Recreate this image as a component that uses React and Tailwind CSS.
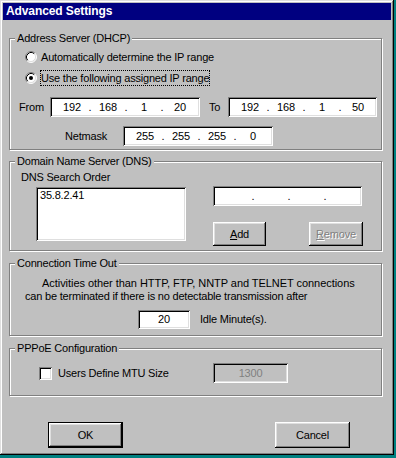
import React from "react";

const sunken =
  "shadow-[inset_1px_1px_0_#808080,inset_-1px_-1px_0_#fff,inset_2px_2px_0_#000,inset_-2px_-2px_0_#dfdfdf]";
const raised =
  "bg-[#c0c0c0] shadow-[inset_-1px_-1px_0_#000,inset_1px_1px_0_#fff,inset_-2px_-2px_0_#808080,inset_2px_2px_0_#dfdfdf]";

function Group({ title, className = "", children }) {
  return (
    <div className={`w-[373px] border border-[#808080] shadow-[1px_1px_0_#fff,inset_1px_1px_0_#fff] ${className}`}>
      <div className="-mt-[7px] ml-[5px] w-fit px-[2px] bg-[#c0c0c0] leading-[13px]">{title}</div>
      {children}
    </div>
  );
}

function IpField({ parts = ["", "", "", ""], className = "" }) {
  return (
    <div className={`${sunken} bg-white h-[20px] flex items-center pl-[6px] shrink-0 ${className}`}>
      {parts.map((p, i) => (
        <React.Fragment key={i}>
          {i > 0 && <span className="w-[4px] text-center">.</span>}
          <span className="w-[32px] text-center">{p}</span>
        </React.Fragment>
      ))}
    </div>
  );
}

function Radio({ checked }) {
  return (
    <svg width="12" height="12" viewBox="0 0 12 12" className="shrink-0">
      <circle cx="6" cy="6" r="5" fill="#fff" />
      <path d="M2.11 9.89A5.5 5.5 0 0 1 9.89 2.11" stroke="#808080" fill="none" />
      <path d="M9.89 2.11A5.5 5.5 0 0 1 2.11 9.89" stroke="#fff" fill="none" />
      <path d="M2.82 9.18A4.5 4.5 0 0 1 9.18 2.82" stroke="#000" fill="none" />
      <path d="M9.18 2.82A4.5 4.5 0 0 1 2.82 9.18" stroke="#dfdfdf" fill="none" />
      {checked && <circle cx="6" cy="6" r="2" fill="#000" />}
    </svg>
  );
}

export default function App() {
  return (
    <div className="w-[396px] h-[458px] bg-[#008080] font-['Liberation_Sans',Arial,sans-serif] text-[11px] tracking-[-0.2px] leading-[13px] text-black">
      <div className="w-[394px] h-[455px] bg-[#c0c0c0] p-[3px] flex flex-col shadow-[inset_-1px_-1px_0_#000,inset_1px_1px_0_#dfdfdf,inset_-2px_-2px_0_#808080,inset_2px_2px_0_#fff]">
        {/* title bar */}
        <div className="h-[17px] bg-[#000080] text-white font-bold text-[12px] tracking-[-0.1px] leading-[17px] pl-[3px]">
          Advanced Settings
        </div>

        <div className="pl-[6px] pt-[18px]">
          <Group title="Address Server (DHCP)" className="pb-[3px]">
            <div className="mt-[2px] h-[20px] flex items-center pl-[15px]">
              <Radio />
              <span className="ml-[3px] border border-transparent leading-[14px]">Automatically determine the IP range</span>
            </div>
            <div className="mt-[1px] h-[20px] flex items-center pl-[15px]">
              <Radio checked />
              <span className="ml-[3px] border border-dotted border-black leading-[14px]">Use the following assigned IP range</span>
            </div>
            <div className="mt-[9px] h-[20px] flex items-center pl-[9px]">
              <span className="w-[31px]">From</span>
              <IpField parts={["192", "168", "1", "20"]} className="w-[150px]" />
              <span className="ml-[9px] w-[19px]">To</span>
              <IpField parts={["192", "168", "1", "50"]} className="w-[149px]" />
            </div>
            <div className="mt-[9px] h-[20px] flex items-center pl-[55px]">
              <span className="w-[58px]">Netmask</span>
              <IpField parts={["255", "255", "255", "0"]} className="w-[150px]" />
            </div>
          </Group>

          <Group title="Domain Name Server (DNS)" className="mt-[11px] pb-[4px]">
            <div className="mt-[2px] pl-[11px] leading-[14px]">DNS Search Order</div>
            <div className="mt-[2px] flex pl-[26px]">
              <div className={`${sunken} bg-white mt-[1px] w-[150px] h-[54px] pt-[2px] pl-[4px]`}>35.8.2.41</div>
              <div className="ml-[27px]">
                <IpField className="w-[149px]" />
                <div className="mt-[16px] flex">
                  <button className={`${raised} w-[53px] h-[24px]`}>
                    <span className="underline">A</span>dd
                  </button>
                  <button className={`${raised} ml-[43px] w-[54px] h-[24px] text-[#808080] [text-shadow:1px_1px_0_#fff]`}>
                    <span className="underline">R</span>emove
                  </button>
                </div>
              </div>
            </div>
          </Group>

          <Group title="Connection Time Out" className="mt-[12px] pb-[6px]">
            <div className="mt-[7px] pl-[32px] tracking-[-0.05px]">Activities other than HTTP, FTP, NNTP and TELNET connections</div>
            <div className="pl-[15px]">can be terminated if there is no detectable transmission after</div>
            <div className="mt-[7px] h-[19px] flex items-center pl-[128px]">
              <div className={`${sunken} bg-white w-[52px] h-[19px] flex items-center justify-center`}>20</div>
              <span className="ml-[10px]">Idle Minute(s).</span>
            </div>
          </Group>

          <Group title="PPPoE Configuration" className="mt-[12px] pb-[12px]">
            <div className="mt-[8px] h-[20px] flex items-center pl-[29px]">
              <div className="w-[174px] flex items-center">
                <div className={`${sunken} bg-white w-[13px] h-[13px] shrink-0`} />
                <span className="ml-[6px]">Users Define MTU Size</span>
              </div>
              <div className={`${sunken} bg-[#c0c0c0] w-[75px] h-[20px] flex items-center justify-center text-[#808080]`}>1300</div>
            </div>
          </Group>

          <div className="mt-[26px] flex">
            <button className={`${raised} ml-[39px] w-[75px] h-[26px] border border-black`}>OK</button>
            <button className={`${raised} ml-[152px] w-[75px] h-[26px]`}>Cancel</button>
          </div>
        </div>
      </div>
    </div>
  );
}
